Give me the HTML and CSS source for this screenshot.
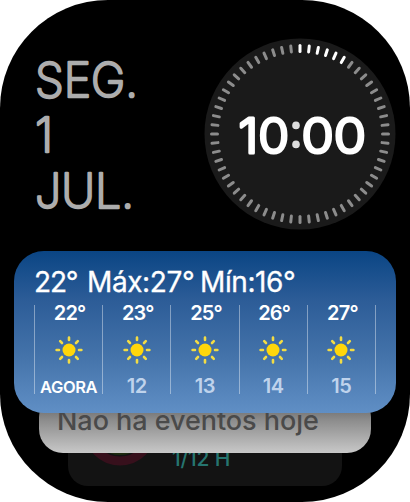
FILE: index.html
```html
<!DOCTYPE html>
<html lang="pt">
<head>
    <meta charset="UTF-8">
    <meta name="viewport" content="width=device-width, initial-scale=1.0">
    <title>Relógio</title>
    <link rel="stylesheet" href="styles.css">
</head>
<body>
    <div class="watch">
        <div class="top">
            <svg class="date" width="120" height="170" viewBox="0 0 120 170">
                <text x="0" y="46.5" textLength="103" lengthAdjust="spacingAndGlyphs">SEG.</text>
                <text x="0" y="102.3">1</text>
                <text x="0" y="158.3" textLength="99" lengthAdjust="spacingAndGlyphs">JUL.</text>
            </svg>

            <svg class="clock" width="192" height="192" viewBox="-96 -96 192 192">
                <circle class="dial" r="95.5"/>
                <g id="ticks"></g>
                <text class="time" x="-61.5" y="18.8" textLength="50.5" lengthAdjust="spacingAndGlyphs">10</text>
                <circle class="colon" cx="-4" cy="-8.6" r="3.8"/>
                <circle class="colon" cx="-4" cy="10.4" r="3.8"/>
                <text class="time" x="1.4" y="18.8" textLength="64.5" lengthAdjust="spacingAndGlyphs">00</text>
            </svg>
        </div>

        <div class="stack">
            <div class="card weather">
                <div class="summary">
                    <span class="now">22°</span>
                    <span class="max">Máx:27°</span>
                    <span class="min">Mín:16°</span>
                </div>
                <div class="hours">
                    <div class="hour">
                        <span class="temp">22°</span>
                        <svg class="sun" viewBox="-14 -14 28 28"><use href="#sun"/></svg>
                        <span class="label current">AGORA</span>
                    </div>
                    <div class="hour">
                        <span class="temp">23°</span>
                        <svg class="sun" viewBox="-14 -14 28 28"><use href="#sun"/></svg>
                        <span class="label">12</span>
                    </div>
                    <div class="hour">
                        <span class="temp">25°</span>
                        <svg class="sun" viewBox="-14 -14 28 28"><use href="#sun"/></svg>
                        <span class="label">13</span>
                    </div>
                    <div class="hour">
                        <span class="temp">26°</span>
                        <svg class="sun" viewBox="-14 -14 28 28"><use href="#sun"/></svg>
                        <span class="label">14</span>
                    </div>
                    <div class="hour">
                        <span class="temp">27°</span>
                        <svg class="sun" viewBox="-14 -14 28 28"><use href="#sun"/></svg>
                        <span class="label">15</span>
                    </div>
                </div>
            </div>

            <div class="card events">Não há eventos hoje</div>

            <div class="card activity">
                <svg class="rings" width="74" height="74" viewBox="-37 -37 74 74">
                    <circle class="move" r="32"/>
                    <circle class="exercise" r="21.5"/>
                </svg>
                <span class="stand">1/12 H</span>
            </div>
        </div>
    </div>

    <svg class="defs" width="0" height="0">
        <defs>
            <g id="sun">
                <circle r="6.5" fill="#ffd60a"/>
                <path class="rays" d="M0-12.4v2.4M0 12.4v-2.4M-12.4 0h2.4M12.4 0h-2.4M-8.8-8.8l1.8 1.8M8.8-8.8l-1.8 1.8M-8.8 8.8l1.8-1.8M8.8 8.8l-1.8-1.8"/>
            </g>
        </defs>
    </svg>

    <script src="script.js"></script>
</body>
</html>
```
FILE: styles.css
```css
body {
    margin: 0;
    background: #fff;
    font-family: Inter, "Liberation Sans", sans-serif;
}

.watch {
    width: 410px;
    height: 502px;
    border-radius: 108px;
    background: #000;
    overflow: hidden;
}

.top {
    display: flex;
    justify-content: space-between;
    height: 213px;
    padding: 38px 14px 0 35px;
}

/* Date */
.date {
    margin-top: 12px;
    overflow: visible;
    fill: #adadad;
    stroke: #adadad;
    stroke-width: 2.4;
    stroke-linejoin: round;
    font-size: 48px;
    font-weight: 200;
}

/* Clock */
.dial {
    fill: #1a1a1a;
}

.tick {
    stroke: #8c8c8c;
    stroke-width: 3;
    stroke-linecap: round;
}

.tick.lit {
    stroke: #fff;
}

.time {
    fill: #fff;
    stroke: #fff;
    stroke-width: 3;
    stroke-linejoin: round;
    font-size: 48px;
    font-weight: 300;
}

.colon {
    fill: #dcdcdc;
}

/* Cards */
.stack {
    display: flex;
    flex-direction: column;
    align-items: center;
}

.card {
    position: relative;
    box-sizing: border-box;
}

.weather {
    z-index: 3;
    width: 382px;
    height: 162px;
    border-radius: 30px;
    padding: 14px 20px 0;
    background: linear-gradient(#0a4584 0%, #2c5c97 30%, #4473aa 65%, #608fc5 100%);
    color: #fff;
}

.summary {
    display: flex;
    height: 40px;
    line-height: 34px;
    font-size: 28px;
    letter-spacing: -0.4px;
    -webkit-text-stroke: 0.3px #fff;
    white-space: nowrap;
}

.now {
    width: 53px;
    letter-spacing: -1.2px;
}

.max {
    width: 113px;
}

.hours {
    display: flex;
    width: 342px;
    height: 89px;
    border-left: 1px solid rgba(255, 255, 255, 0.4);
    box-sizing: border-box;
}

.hour {
    display: flex;
    flex: 1;
    flex-direction: column;
    align-items: center;
    border-right: 1px solid rgba(255, 255, 255, 0.4);
}

.temp {
    height: 31px;
    line-height: 16px;
    font-size: 20px;
    font-weight: 600;
    letter-spacing: -0.8px;
    padding-left: 2px;
}

.sun {
    flex: none;
    width: 28px;
    height: 28px;
}

.rays {
    fill: none;
    stroke: #f2dc45;
    stroke-width: 2.6;
    stroke-linecap: round;
}

.label {
    margin-top: 14px;
    line-height: 16px;
    font-size: 20px;
    font-weight: 600;
    letter-spacing: -0.4px;
    color: #bfd3ec;
}

.label.current {
    margin-top: 16px;
    line-height: 14px;
    font-size: 16.5px;
    color: #fff;
}

.events {
    z-index: 2;
    width: 332px;
    height: 60px;
    margin-top: -20px;
    padding: 12px 18px 0;
    border-radius: 24px;
    background: linear-gradient(#777 30%, #8c8c8c 45%, #c8c8c8 100%);
    color: #4a4a4a;
    font-size: 27px;
    font-weight: 500;
    letter-spacing: -0.05px;
    line-height: 32px;
    white-space: nowrap;
}

.activity {
    z-index: 1;
    display: flex;
    width: 274px;
    height: 94px;
    margin-top: -61px;
    padding-left: 15px;
    border-radius: 20px;
    background: #131313;
}

.rings {
    fill: none;
    stroke-width: 9;
}

.move {
    stroke: #37101c;
}

.exercise {
    stroke: #1d2b10;
}

.stand {
    margin: 54px 0 0 15px;
    line-height: 26px;
    font-size: 21px;
    font-weight: 500;
    letter-spacing: -0.2px;
    color: #267570;
}

.defs {
    display: block;
}
```
FILE: script.js
```js
const ticks = document.getElementById('ticks');

// 60 second marks, the first six are lit
for (let i = 0; i < 60; i++) {
    const tick = document.createElementNS('http://www.w3.org/2000/svg', 'line');
    tick.setAttribute('y1', -88.5);
    tick.setAttribute('y2', -82.5);
    tick.setAttribute('transform', `rotate(${i * 6})`);
    tick.setAttribute('class', i < 6 ? 'tick lit' : 'tick');
    ticks.appendChild(tick);
}
```
